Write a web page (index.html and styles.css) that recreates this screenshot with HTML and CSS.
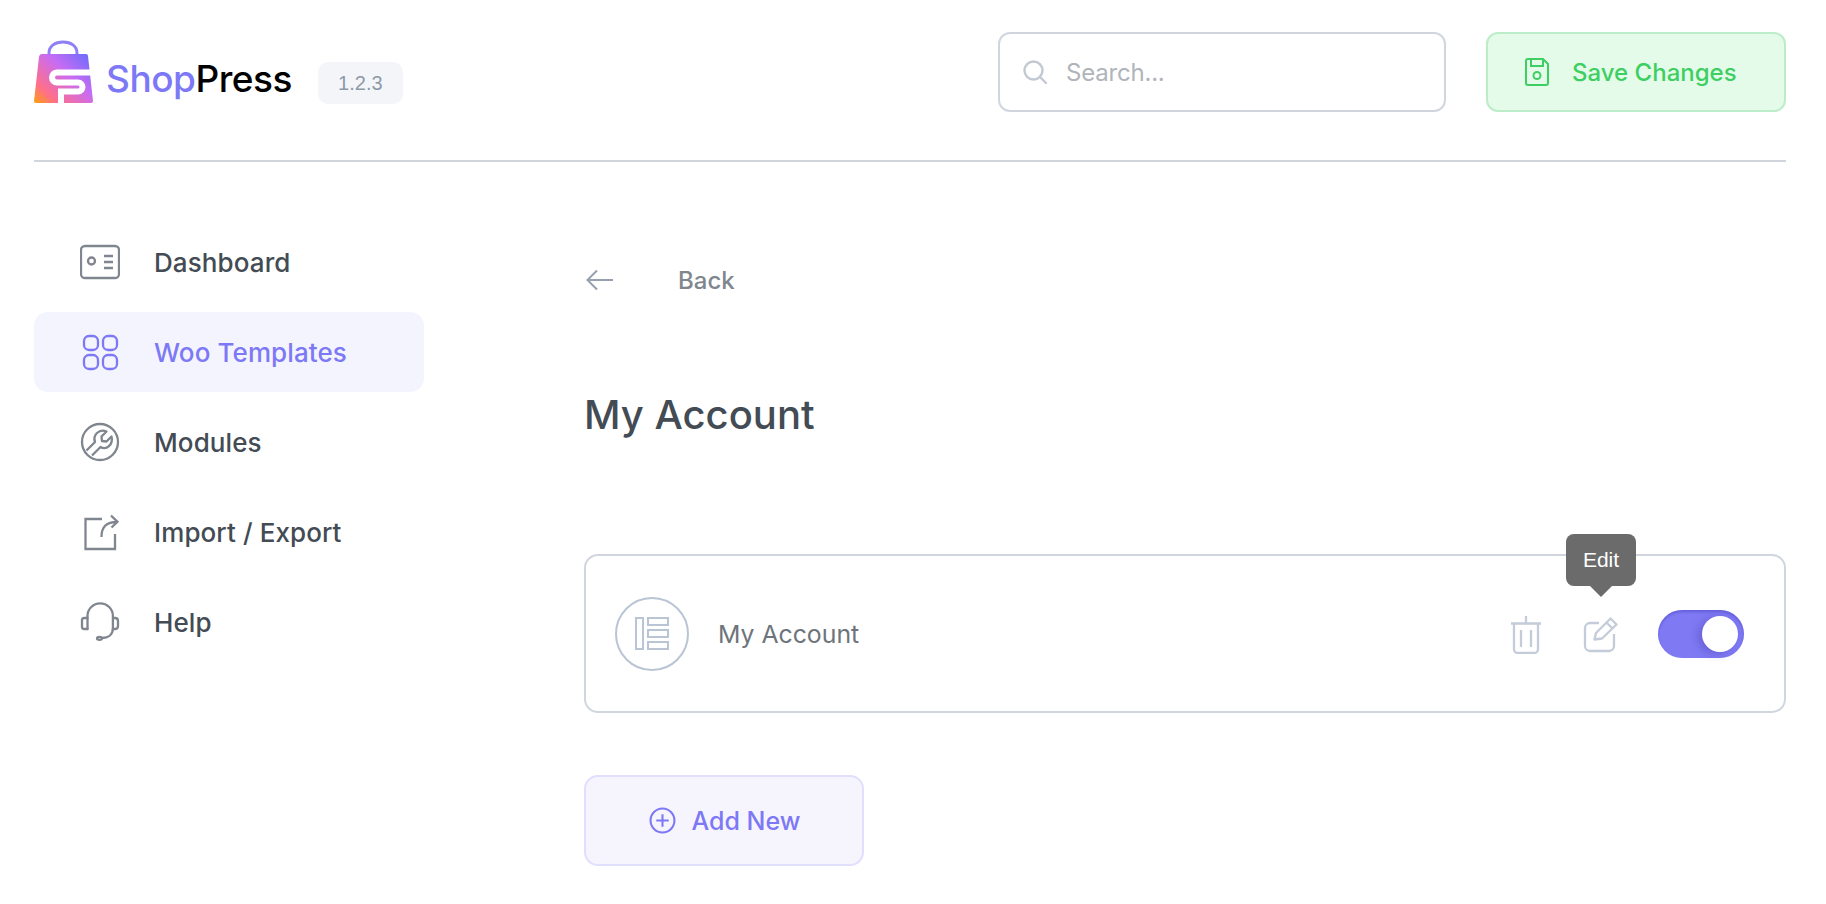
FILE: index.html
```html
<!DOCTYPE html>
<html lang="en">
<head>
    <meta charset="UTF-8">
    <meta name="viewport" content="width=device-width, initial-scale=1.0">
    <title>ShopPress - My Account</title>
    <link rel="stylesheet" href="styles.css">
</head>
<body>
    <header class="topbar">
        <div class="brand">
            <svg class="brand-logo" width="59" height="64" viewBox="0 0 59 64" fill="none">
                <defs>
                    <linearGradient id="bagGrad" x1="0" y1="1" x2="1" y2="0.1">
                        <stop offset="0" stop-color="#ff9f0a"/>
                        <stop offset="0.22" stop-color="#ff6f8a"/>
                        <stop offset="0.62" stop-color="#c86cf4"/>
                        <stop offset="1" stop-color="#6d6cfb"/>
                    </linearGradient>
                </defs>
                <path d="M15 15V13C15 6 21 2 29 2C37 2 43 6 43 13V15" stroke="#8f80f8" stroke-width="3"/>
                <path d="M8 14H52Q54 14 54 16L59 61Q59 63 57 63H2Q0 63 0 61L5 17Q5.500 14 8 14Z" fill="url(#bagGrad)"/>
                <path d="M58 32.500H23A5 5 0 0 0 23 42.500H44A4.500 4.500 0 0 1 44 51.500H27V64" stroke="#fff" stroke-width="6"/>
            </svg>
            <span class="brand-name"><span class="brand-shop">Shop</span>Press</span>
            <span class="version">1.2.3</span>
        </div>
        <div class="search">
            <svg width="26" height="26" viewBox="0 0 26 26" fill="none" stroke="#c3c9d3" stroke-width="2.400" stroke-linecap="round">
                <circle cx="11.500" cy="11.500" r="9"/>
                <path d="M18 18L24 24"/>
            </svg>
            <input type="text" placeholder="Search...">
        </div>
        <button class="save-btn">
            <svg width="26" height="30" viewBox="0 0 26 30" fill="none" stroke="#3ecf63" stroke-width="2">
                <path d="M4 2H19L24 7V26A2 2 0 0 1 22 28H4A2 2 0 0 1 2 26V4A2 2 0 0 1 4 2Z"/>
                <path d="M7 2V9H19V2"/>
                <circle cx="13" cy="18.500" r="3.500"/>
            </svg>
            Save Changes
        </button>
    </header>

    <div class="layout">
        <nav class="sidebar">
            <a class="nav-item">
                <svg width="40" height="40" viewBox="0 0 40 40" fill="none" stroke="currentColor" stroke-width="2.300">
                    <rect x="1" y="4" width="38" height="32" rx="4"/>
                    <circle cx="11.500" cy="19" r="3.500"/>
                    <path d="M24 14H33M24 20H33M24 26H33"/>
                </svg>
                <span>Dashboard</span>
            </a>
            <a class="nav-item active">
                <svg width="40" height="40" viewBox="0 0 40 40" fill="none" stroke="currentColor" stroke-width="2.300">
                    <rect x="4" y="4" width="14" height="14" rx="5"/>
                    <rect x="23" y="4" width="14" height="14" rx="5"/>
                    <rect x="4" y="23" width="14" height="14" rx="5"/>
                    <rect x="23" y="23" width="14" height="14" rx="5"/>
                </svg>
                <span>Woo Templates</span>
            </a>
            <a class="nav-item">
                <svg width="40" height="40" viewBox="0 0 40 40" fill="none" stroke="currentColor" stroke-width="2.300" stroke-linejoin="round">
                    <circle cx="20" cy="20" r="18"/>
                    <path d="M6.500 28.500L15 20C12.500 13 19 6.500 26.500 9.500L21.500 14.500L22 19L26.500 19.500L31.500 14.500C33.500 22 27 28.500 20.500 25L12 33.500"/>
                </svg>
                <span>Modules</span>
            </a>
            <a class="nav-item">
                <svg width="40" height="40" viewBox="0 0 40 40" fill="none" stroke="currentColor" stroke-width="2.300">
                    <path d="M22 7H5.500V37H35V22"/>
                    <path d="M21.500 25C21.500 14 27 10 37 10M31 3.500L37.500 9.800L31.500 15.500"/>
                </svg>
                <span>Import / Export</span>
            </a>
            <a class="nav-item">
                <svg width="40" height="40" viewBox="0 0 40 40" fill="none" stroke="currentColor" stroke-width="2.300" stroke-linecap="round">
                    <path d="M7.500 27V14A12.700 12.700 0 0 1 32.900 14V26C32.900 33 28 36 22 36"/>
                    <path d="M7.500 16H4.500Q2 16 2 18V25Q2 27 4.500 27H7.500"/>
                    <path d="M33 16H35Q38 16 38 19V24Q38 27 35 27H33"/>
                    <ellipse cx="19.500" cy="36.300" rx="2.500" ry="1.500"/>
                </svg>
                <span>Help</span>
            </a>
        </nav>

        <main class="content">
            <a class="back">
                <svg width="28" height="22" viewBox="0 0 28 22" fill="none" stroke="#96a0ae" stroke-width="2">
                    <path d="M27 11H2M11 1.500L1.500 11L11 20.500"/>
                </svg>
                <span>Back</span>
            </a>
            <h1>My Account</h1>

            <div class="card">
                <div class="card-icon">
                    <svg width="34" height="33" viewBox="0 0 34 33" fill="none" stroke="#b9c5d4" stroke-width="2">
                        <rect x="1" y="1" width="7" height="31"/>
                        <rect x="13" y="1" width="20" height="7"/>
                        <rect x="13" y="13" width="20" height="7"/>
                        <rect x="13" y="25" width="20" height="7"/>
                    </svg>
                </div>
                <span class="card-title">My Account</span>
                <div class="card-actions">
                    <svg class="trash" width="30" height="38" viewBox="0 0 30 38" fill="none" stroke="#c3ccd8" stroke-width="2.300">
                        <path d="M15 0V7M0 7.500H30"/>
                        <path d="M3 8V33A4 4 0 0 0 7 37H23A4 4 0 0 0 27 33V8"/>
                        <path d="M10 14V31M20 14V31"/>
                    </svg>
                    <div class="edit">
                        <span class="tooltip">Edit</span>
                        <svg width="38" height="38" viewBox="0 0 38 38" fill="none" stroke="#c3ccd8" stroke-width="2.300" stroke-linejoin="round">
                            <path d="M17 7H8A5 5 0 0 0 3 12V30A5 5 0 0 0 8 35H27A5 5 0 0 0 32 30V18"/>
                            <path d="M12.500 23.500L14 17L28.500 2.500L34.500 8.500L20 22.500L12.500 23.500Z"/>
                            <path d="M24.500 6.500L30.500 12.500"/>
                        </svg>
                    </div>
                    <div class="toggle"><span class="knob"></span></div>
                </div>
            </div>

            <button class="add-btn">
                <svg width="27" height="27" viewBox="0 0 26 26" fill="none" stroke="#7d78f6" stroke-width="2">
                    <circle cx="13" cy="13" r="11.500"/>
                    <path d="M13 7V19M7 13H19"/>
                </svg>
                Add New
            </button>
        </main>
    </div>
</body>
</html>
```

FILE: styles.css
```css
* { box-sizing: border-box; }
body { margin: 0; background: #fff; font-family: Inter, "Noto Sans", sans-serif; color: #434b54; }

.topbar { display: flex; align-items: flex-start; height: 162px; margin: 0 40px 0 34px; padding-top: 32px; border-bottom: 2px solid #d1d6dc; }
.brand { display: flex; align-items: flex-start; height: 72px; margin-right: auto; }
.brand-logo { margin-top: 8px; margin-right: 13px; }
.brand-name { margin-top: 24px; font-size: 37px; line-height: 46px; font-weight: 500; color: #000; letter-spacing: -0.5px; }
.brand-shop { color: #7d78f6; }
.version { display: flex; align-items: center; justify-content: center; width: 85px; height: 42px; margin-left: 26px; margin-top: 30px; border-radius: 10px; background: #f4f5f9; color: #8e99a8; font-family: "Liberation Sans", sans-serif; font-size: 20px; }

.search { display: flex; align-items: center; gap: 18px; width: 448px; height: 80px; padding-left: 22px; border: 2px solid #d1d6de; border-radius: 12px; }
.search input { flex: 1; min-width: 0; border: 0; outline: 0; padding: 0; font-family: inherit; font-size: 24px; letter-spacing: -0.2px; background: transparent; }
.search input::placeholder { color: #b0b4bb; opacity: 1; }

.save-btn { display: flex; align-items: center; gap: 22px; width: 300px; height: 80px; margin-left: 40px; padding-left: 36px; border: 2px solid #bdecc8; border-radius: 12px; background: #e5fbea; color: #3ecf63; font-family: inherit; font-size: 24px; font-weight: 500; }

.layout { display: flex; margin: 0 40px 0 34px; }
.sidebar { display: flex; flex-direction: column; gap: 10px; width: 390px; padding-top: 60px; }
.nav-item { display: flex; align-items: center; height: 80px; padding-left: 46px; border-radius: 14px; color: #434b54; font-size: 26px; font-weight: 500; letter-spacing: 0.1px; }
.nav-item svg { margin-right: 34px; color: #80868f; }
.nav-item.active { background: #f4f4fe; color: #7d78f6; }
.nav-item.active svg { color: #7d78f6; }

.content { flex: 1; margin-left: 160px; padding-top: 103px; }
.back { display: flex; align-items: center; height: 30px; color: #7f868e; font-size: 24px; font-weight: 500; }
.back svg { margin-right: 64px; margin-left: 2px; }
.content h1 { margin: 95px 0 0; font-size: 40px; line-height: 50px; font-weight: 500; color: #434b54; }

.card { display: flex; align-items: center; height: 159px; margin-top: 114px; padding: 0 40px 0 29px; border: 2px solid #d1d6de; border-radius: 14px; }
.card-icon { display: flex; align-items: center; justify-content: center; width: 74px; height: 74px; border: 2px solid #b9c5d4; border-radius: 50%; }
.card-title { margin-left: 29px; font-size: 24.800px; color: #6e747b; }
.card-actions { display: flex; align-items: center; margin-left: auto; }
.trash { margin-top: 3px; margin-right: -1px; }
.edit { position: relative; display: flex; margin-top: 2px; margin-left: 42px; }
.tooltip { position: absolute; left: 50%; bottom: calc(100% + 30px); transform: translateX(-50%); width: 70px; height: 52px; border-radius: 8px; background: #6b6b6b; color: #fff; font-family: "Liberation Sans", sans-serif; font-size: 21px; line-height: 52px; text-align: center; }
.tooltip::after { content: ""; position: absolute; left: 24px; top: 100%; border: 11px solid transparent; border-bottom: 0; border-top-color: #6b6b6b; }
.toggle { position: relative; width: 86px; height: 48px; margin-left: 38px; border-radius: 24px; background: #7f7af4; box-shadow: inset 0 2px 3px rgba(70, 60, 190, .45); }
.knob { position: absolute; top: 6px; right: 6px; width: 36px; height: 36px; border-radius: 50%; background: #fff; box-shadow: -4px 2px 10px rgba(60, 50, 160, .35); }

.add-btn { display: flex; align-items: center; justify-content: center; gap: 15px; width: 280px; height: 91px; margin-top: 62px; padding-left: 8px; border: 2px solid #e0dffe; border-radius: 14px; background: #f6f5fe; color: #7d78f6; font-family: inherit; font-size: 25px; font-weight: 500; }
```
